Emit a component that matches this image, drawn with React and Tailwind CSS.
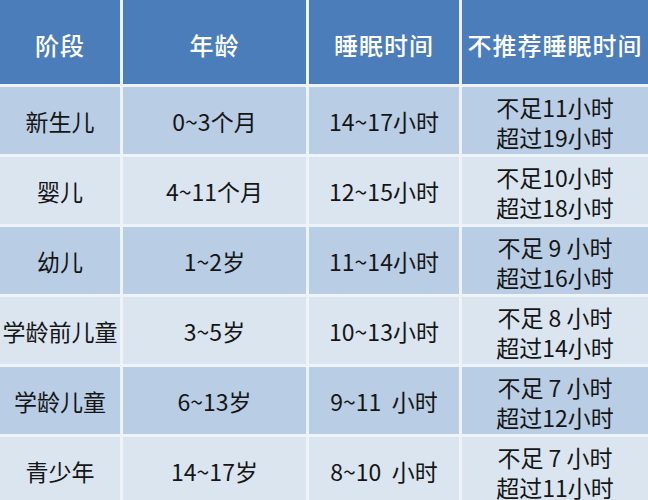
import React from "react";

const rows = [
  ["新生儿", "0~3个月", "14~17小时", ["不足11小时", "超过19小时"]],
  ["婴儿", "4~11个月", "12~15小时", ["不足10小时", "超过18小时"]],
  ["幼儿", "1~2岁", "11~14小时", ["不足 9 小时", "超过16小时"]],
  ["学龄前儿童", "3~5岁", "10~13小时", ["不足 8 小时", "超过14小时"]],
  ["学龄儿童", "6~13岁", "9~11  小时", ["不足 7 小时", "超过12小时"]],
  ["青少年", "14~17岁", "8~10  小时", ["不足 7 小时", "超过11小时"]],
];

const headers = ["阶段", "年龄", "睡眠时间", "不推荐睡眠时间"];

export default function App() {
  return (
    <div
      className="w-[648px] h-[500px] overflow-hidden bg-[#eef3f8]"
      style={{ fontFamily: '"Noto Sans CJK SC", "Noto Sans", sans-serif' }}
    >
      <div className="grid grid-cols-[120px_183px_150px_186px] grid-rows-[84px_repeat(6,67px)] gap-[3px]">
        {headers.map((h) => (
          <div
            key={h}
            className="bg-[#4a7dba] text-white text-[24px] font-medium flex items-center justify-center pt-[6px] tracking-[1px]"
          >
            {h}
          </div>
        ))}
        {rows.map((r, i) => {
          const bg = i % 2 === 0 ? "bg-[#b9cde5]" : "bg-[#dae5f0]";
          return (
            <React.Fragment key={i}>
              <div className={`${bg} flex items-center justify-center pt-[2px] text-[23px] text-[#151515] whitespace-pre`}>
                {r[0]}
              </div>
              <div className={`${bg} flex items-center justify-center pt-[2px] text-[23px] text-[#151515] whitespace-pre`}>
                {r[1]}
              </div>
              <div className={`${bg} flex items-center justify-center pt-[2px] text-[23px] text-[#151515] whitespace-pre`}>
                {r[2]}
              </div>
              <div className={`${bg} flex flex-col items-center justify-center pt-[2px] text-[23px] leading-[30px] text-[#151515] whitespace-pre`}>
                <span>{r[3][0]}</span>
                <span>{r[3][1]}</span>
              </div>
            </React.Fragment>
          );
        })}
      </div>
    </div>
  );
}
